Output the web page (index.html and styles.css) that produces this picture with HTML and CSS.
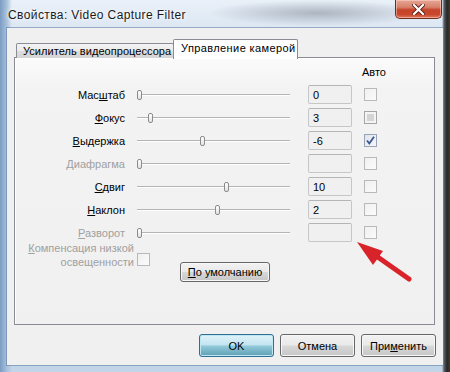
FILE: index.html
```html
<!DOCTYPE html>
<html lang="ru">

<head>
    <meta charset="UTF-8">
    <meta name="viewport" content="width=device-width, initial-scale=1.0">
    <title>Свойства: Video Capture Filter</title>
    <link rel="stylesheet" href="styles.css">
</head>

<body>
    <div class="window">
        <div class="titlebar">
            <span class="title">Свойства: Video Capture Filter</span>
            <button class="close">
                <svg width="13" height="11" viewBox="0 0 13 11">
                    <path d="M2 1 L11 10 M11 1 L2 10" stroke="#5a1d14" stroke-width="4" stroke-linecap="square" />
                    <path d="M2 1 L11 10 M11 1 L2 10" stroke="#fff" stroke-width="2.2" stroke-linecap="square" />
                </svg>
            </button>
        </div>

        <div class="client">
            <div class="tabs">
                <div class="tab">Усилитель видеопроцессора</div>
                <div class="tab active">Управление камерой</div>
            </div>

            <div class="panel">
                <div class="grid">
                    <div class="auto-head">Авто</div>

                    <label class="lbl">Мас<u>ш</u>таб</label>
                    <div class="slider"><span class="thumb" style="left: 2px"></span></div>
                    <div class="edit">0</div>
                    <span class="chk"></span>

                    <label class="lbl"><u>Ф</u>окус</label>
                    <div class="slider"><span class="thumb" style="left: 13px"></span></div>
                    <div class="edit">3</div>
                    <span class="chk mixed"></span>

                    <label class="lbl"><u>В</u>ыдержка</label>
                    <div class="slider"><span class="thumb" style="left: 65px"></span></div>
                    <div class="edit">-6</div>
                    <span class="chk checked">
                        <svg width="11" height="11" viewBox="0 0 11 11">
                            <path d="M2 5.5 L4.3 8.5 L9 1.8" fill="none" stroke="#3c5894" stroke-width="1.8" />
                        </svg>
                    </span>

                    <label class="lbl off"><u>Д</u>иафрагма</label>
                    <div class="slider"><span class="thumb" style="left: 2px"></span></div>
                    <div class="edit"></div>
                    <span class="chk"></span>

                    <label class="lbl"><u>С</u>двиг</label>
                    <div class="slider"><span class="thumb" style="left: 89px"></span></div>
                    <div class="edit">10</div>
                    <span class="chk"></span>

                    <label class="lbl"><u>Н</u>аклон</label>
                    <div class="slider"><span class="thumb" style="left: 80px"></span></div>
                    <div class="edit">2</div>
                    <span class="chk"></span>

                    <label class="lbl off"><u>Р</u>азворот</label>
                    <div class="slider"><span class="thumb" style="left: 2px"></span></div>
                    <div class="edit"></div>
                    <span class="chk"></span>
                </div>

                <div class="extra">
                    <label class="lbl-wrap off"><u>К</u>омпенсация низкой<br>освещенности</label>
                    <span class="chk low"></span>
                    <button class="btn btn-default"><u>П</u>о умолчанию</button>
                </div>
            </div>

            <div class="actions">
                <button class="btn btn-focus">OK</button>
                <button class="btn">Отмена</button>
                <button class="btn">При<u>м</u>енить</button>
            </div>
        </div>

        <svg class="arrow" width="70" height="50" viewBox="350 236 70 50">
            <path d="M409 279 L372 253" stroke="#d8232a" stroke-width="5" stroke-linecap="round" />
            <path d="M357 242 L383 251 L373 265 Z" fill="#d8232a" />
        </svg>
    </div>
</body>

</html>
```

FILE: styles.css
```css
body {
    margin: 0;
    padding: 0;
    background-color: #2f2b27;
    font-family: "Liberation Sans", Arial, sans-serif;
    font-size: 11px;
    color: #000;
}

.window {
    position: relative;
    width: 450px;
    height: 372px;
    box-sizing: border-box;
    padding: 0 7px 7px 7px;
    display: flex;
    flex-direction: column;
    background:
        linear-gradient(to right, transparent 442px, #56606c 444px, #2a2724 447px, #3d3731 450px),
        radial-gradient(ellipse 110px 13px at 318px 13px, rgba(105, 115, 128, 0.45), transparent),
        linear-gradient(to right, #7b9cc2 0, #a9c2dc 7px, transparent 12px),
        linear-gradient(180deg, #e9f0f8 0, #dce7f3 28px, #c9daec 200px, #c2d4e8 100%);
}

.titlebar {
    height: 28px;
    display: flex;
    align-items: flex-start;
    justify-content: space-between;
}

.title {
    margin: 8px 0 0 1px;
    font-size: 12px;
    letter-spacing: 0.4px;
    line-height: 14px;
    color: #1b1b1b;
    text-shadow: 0 0 6px #fff, 0 0 3px #fff;
}

.close {
    width: 47px;
    height: 19px;
    margin-right: 1px;
    padding: 0;
    border: 1px solid #6e2b20;
    border-top: none;
    border-radius: 0 0 5px 5px;
    background: linear-gradient(180deg, #e8a596 0, #d7826c 40%, #c4432a 55%, #c8472c 80%, #e0785c 100%);
    box-shadow: inset 0 0 0 1px rgba(255, 220, 210, 0.5);
    display: flex;
    justify-content: center;
    align-items: center;
}

.client {
    flex: 1;
    background-color: #f0f0f0;
    box-shadow: 0 0 0 1px rgba(90, 120, 160, 0.55);
    padding: 11px 7px 8px 7px;
    display: flex;
    flex-direction: column;
}

.tabs {
    display: flex;
    align-items: flex-end;
    height: 19px;
    margin-left: 2px;
    position: relative;
    z-index: 1;
}

.tab {
    height: 15px;
    box-sizing: border-box;
    width: 158px;
    border: 1px solid #898c95;
    border-bottom: none;
    border-radius: 2px 2px 0 0;
    background: linear-gradient(180deg, #f3f3f3 0, #ebebeb 50%, #dddddd 51%, #d4d4d4 100%);
    padding: 0 0 0 6px;
    line-height: 14px;
    letter-spacing: 0.05px;
    white-space: nowrap;
}

.tab.active {
    width: 125px;
    height: 20px;
    margin-left: -1px;
    margin-bottom: -1px;
    background: #fff;
    padding: 1px 0 0 7px;
    letter-spacing: 0.4px;
}

.panel {
    height: 268px;
    margin-top: -1px;
    margin-right: 1px;
    box-sizing: border-box;
    border: 1px solid #898c95;
    box-shadow: inset 1px 1px 0 #fff;
    background: linear-gradient(180deg, #fbfbfb 0, #f3f3f3 30px, #f0f0f0 100%);
}

.grid {
    display: grid;
    grid-template-columns: 110px 167px 60px 25px;
    grid-template-rows: 25px repeat(7, 23px);
    align-items: center;
}

.auto-head {
    grid-column: 4;
    align-self: start;
    margin: 7px 0 0 10px;
    line-height: 14px;
    white-space: nowrap;
}

.lbl {
    grid-column: 1;
    text-align: right;
    line-height: 14px;
}

.off {
    color: #a0a0a0;
}

.slider {
    position: relative;
    width: 157px;
    height: 10px;
    margin-left: 10px;
}

.slider::before {
    content: "";
    position: absolute;
    left: 2px;
    right: 2px;
    top: 4px;
    height: 1px;
    background-color: #b4b4b4;
    border-bottom: 1px solid #fff;
}

.thumb {
    position: absolute;
    top: 0;
    width: 5px;
    height: 10px;
    box-sizing: border-box;
    border: 1px solid #8c8c8c;
    border-radius: 2px;
    background: linear-gradient(180deg, #ffffff, #e2e2e2);
}

.edit {
    width: 44px;
    height: 19px;
    margin-left: 16px;
    box-sizing: border-box;
    border: 1px solid #c6c6c6;
    border-top-color: #b5b5b5;
    border-radius: 2px;
    background-color: #f0f0f0;
    padding: 2px 0 0 4px;
    line-height: 14px;
}

.chk {
    width: 13px;
    height: 13px;
    margin-left: 12px;
    box-sizing: border-box;
    border: 1px solid #b9b9b9;
    background: linear-gradient(135deg, #f0f0f0, #fbfbfb);
    display: flex;
    justify-content: center;
    align-items: center;
}

.chk.mixed {
    border-color: #a6a6a6;
    box-shadow: inset 0 0 0 2px #f4f4f4;
    background: #d4d4d4;
}

.chk.checked {
    border-color: #9aa4b4;
    background: linear-gradient(135deg, #dfe4ec, #f6f7f9);
}

.extra {
    display: flex;
    align-items: flex-start;
    margin-top: -3px;
}

.lbl-wrap {
    width: 119px;
    text-align: right;
    line-height: 14px;
}

.chk.low {
    margin: 12px 0 0 3px;
}

.btn {
    width: 75px;
    height: 23px;
    padding: 0;
    border: 1px solid #676767;
    border-radius: 3px;
    background: linear-gradient(180deg, #f2f2f2 0, #e9e9e9 48%, #d8d8d8 52%, #c6c6c6 100%);
    box-shadow: inset 0 0 0 1px #f8f8f8;
    font-family: "Liberation Sans", Arial, sans-serif;
    font-size: 11px;
    color: #000;
}

.btn-default {
    width: 90px;
    height: 20px;
    margin: 21px 0 0 30px;
}

.btn-focus {
    border-color: #2f6f8f;
    background: linear-gradient(180deg, #e0f2f8 0, #c4e5f1 45%, #8fc7d9 55%, #5f9fb3 100%);
    box-shadow: inset 0 0 0 1px #bfe6f4;
}

.actions {
    display: flex;
    justify-content: flex-end;
    gap: 6px;
    margin-top: 9px;
}

.arrow {
    position: absolute;
    left: 350px;
    top: 236px;
    pointer-events: none;
}
```
